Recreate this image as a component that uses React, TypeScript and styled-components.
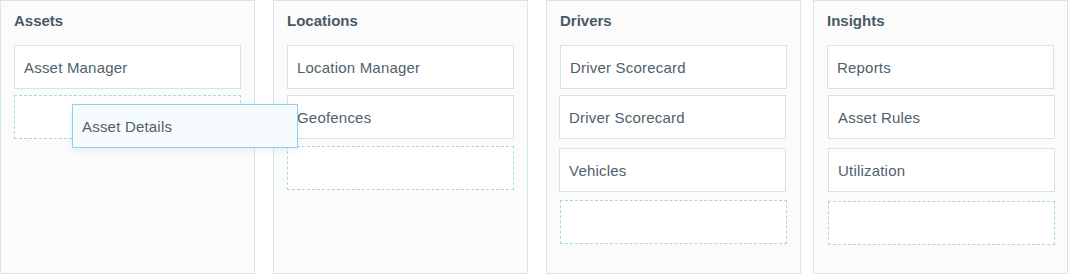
import React from "react";
import styled, { createGlobalStyle } from "styled-components";

const GlobalStyle = createGlobalStyle`
  html, body {
    margin: 0;
    padding: 0;
    background: #ffffff;
  }
  body {
    font-family: "Liberation Sans", Arial, Helvetica, sans-serif;
    color: #4b5d68;
    -webkit-font-smoothing: antialiased;
  }
`;

const Board = styled.div`
  position: relative;
  display: flex;
  align-items: stretch;
  width: 1068px;
  height: 274px;
`;

const Column = styled.section<{ $offset: number }>`
  box-sizing: border-box;
  flex: 0 0 255px;
  width: 255px;
  min-width: 0;
  height: 274px;
  margin-left: ${(p) => p.$offset}px;
  padding: 11px 13px 0 13px;
  background: #fbfbfb;
  border: 1px solid #d8e3ec;
  display: flex;
  flex-direction: column;
`;

const ColumnTitle = styled.h2`
  margin: 0 0 15px 0;
  font-size: 15px;
  line-height: 18px;
  font-weight: 700;
  color: #485a65;
`;

const CardList = styled.div`
  display: flex;
  flex-direction: column;
  gap: 6px;
`;

const Card = styled.div<{ $dx?: number; $dy?: number }>`
  box-sizing: border-box;
  width: 227px;
  height: 44px;
  padding: 0 9px;
  display: flex;
  align-items: center;
  background: #ffffff;
  border: 1px solid #d5e2ec;
  font-size: 15px;
  letter-spacing: 0.2px;
  color: #4f616b;
  transform: translate(${(p) => p.$dx ?? 0}px, ${(p) => p.$dy ?? 0}px);
`;

const DropSlot = styled.div<{ $dx?: number; $dy?: number }>`
  box-sizing: border-box;
  width: 227px;
  height: 44px;
  border: 1px dashed #a3d7ec;
  background: #ffffff;
  transform: translate(${(p) => p.$dx ?? 0}px, ${(p) => p.$dy ?? 0}px);
`;

const DragPreview = styled.div`
  position: absolute;
  left: 72px;
  top: 104px;
  box-sizing: border-box;
  width: 226px;
  height: 44px;
  padding: 0 9px;
  display: flex;
  align-items: center;
  background: #f6fbfe;
  border: 1px solid #8fd0ea;
  box-shadow: 0 2px 6px rgba(60, 90, 110, 0.1);
  font-size: 15px;
  letter-spacing: 0.2px;
  color: #4f616b;
`;

type Item =
  | { kind: "card"; label: string; dx?: number; dy?: number }
  | { kind: "slot"; dx?: number; dy?: number };

const columns: { title: string; offset: number; items: Item[] }[] = [
  {
    title: "Assets",
    offset: 0,
    items: [
      { kind: "card", label: "Asset Manager" },
      { kind: "slot" },
    ],
  },
  {
    title: "Locations",
    offset: 18,
    items: [
      { kind: "card", label: "Location Manager" },
      { kind: "card", label: "Geofences" },
      { kind: "slot", dy: 1 },
    ],
  },
  {
    title: "Drivers",
    offset: 18,
    items: [
      { kind: "card", label: "Driver Scorecard" },
      { kind: "card", label: "Driver Scorecard", dx: -1 },
      { kind: "card", label: "Vehicles", dx: -1, dy: 3 },
      { kind: "slot", dy: 5 },
    ],
  },
  {
    title: "Insights",
    offset: 12,
    items: [
      { kind: "card", label: "Reports" },
      { kind: "card", label: "Asset Rules", dx: 1 },
      { kind: "card", label: "Utilization", dx: 1, dy: 3 },
      { kind: "slot", dx: 1, dy: 6 },
    ],
  },
];

export default function App() {
  return (
    <>
      <GlobalStyle />
      <Board>
        {columns.map((col) => (
          <Column key={col.title} $offset={col.offset}>
            <ColumnTitle>{col.title}</ColumnTitle>
            <CardList>
              {col.items.map((item, i) =>
                item.kind === "card" ? (
                  <Card key={i} $dx={item.dx} $dy={item.dy}>
                    {item.label}
                  </Card>
                ) : (
                  <DropSlot key={i} $dx={item.dx} $dy={item.dy} />
                )
              )}
            </CardList>
          </Column>
        ))}
        <DragPreview>Asset Details</DragPreview>
      </Board>
    </>
  );
}
